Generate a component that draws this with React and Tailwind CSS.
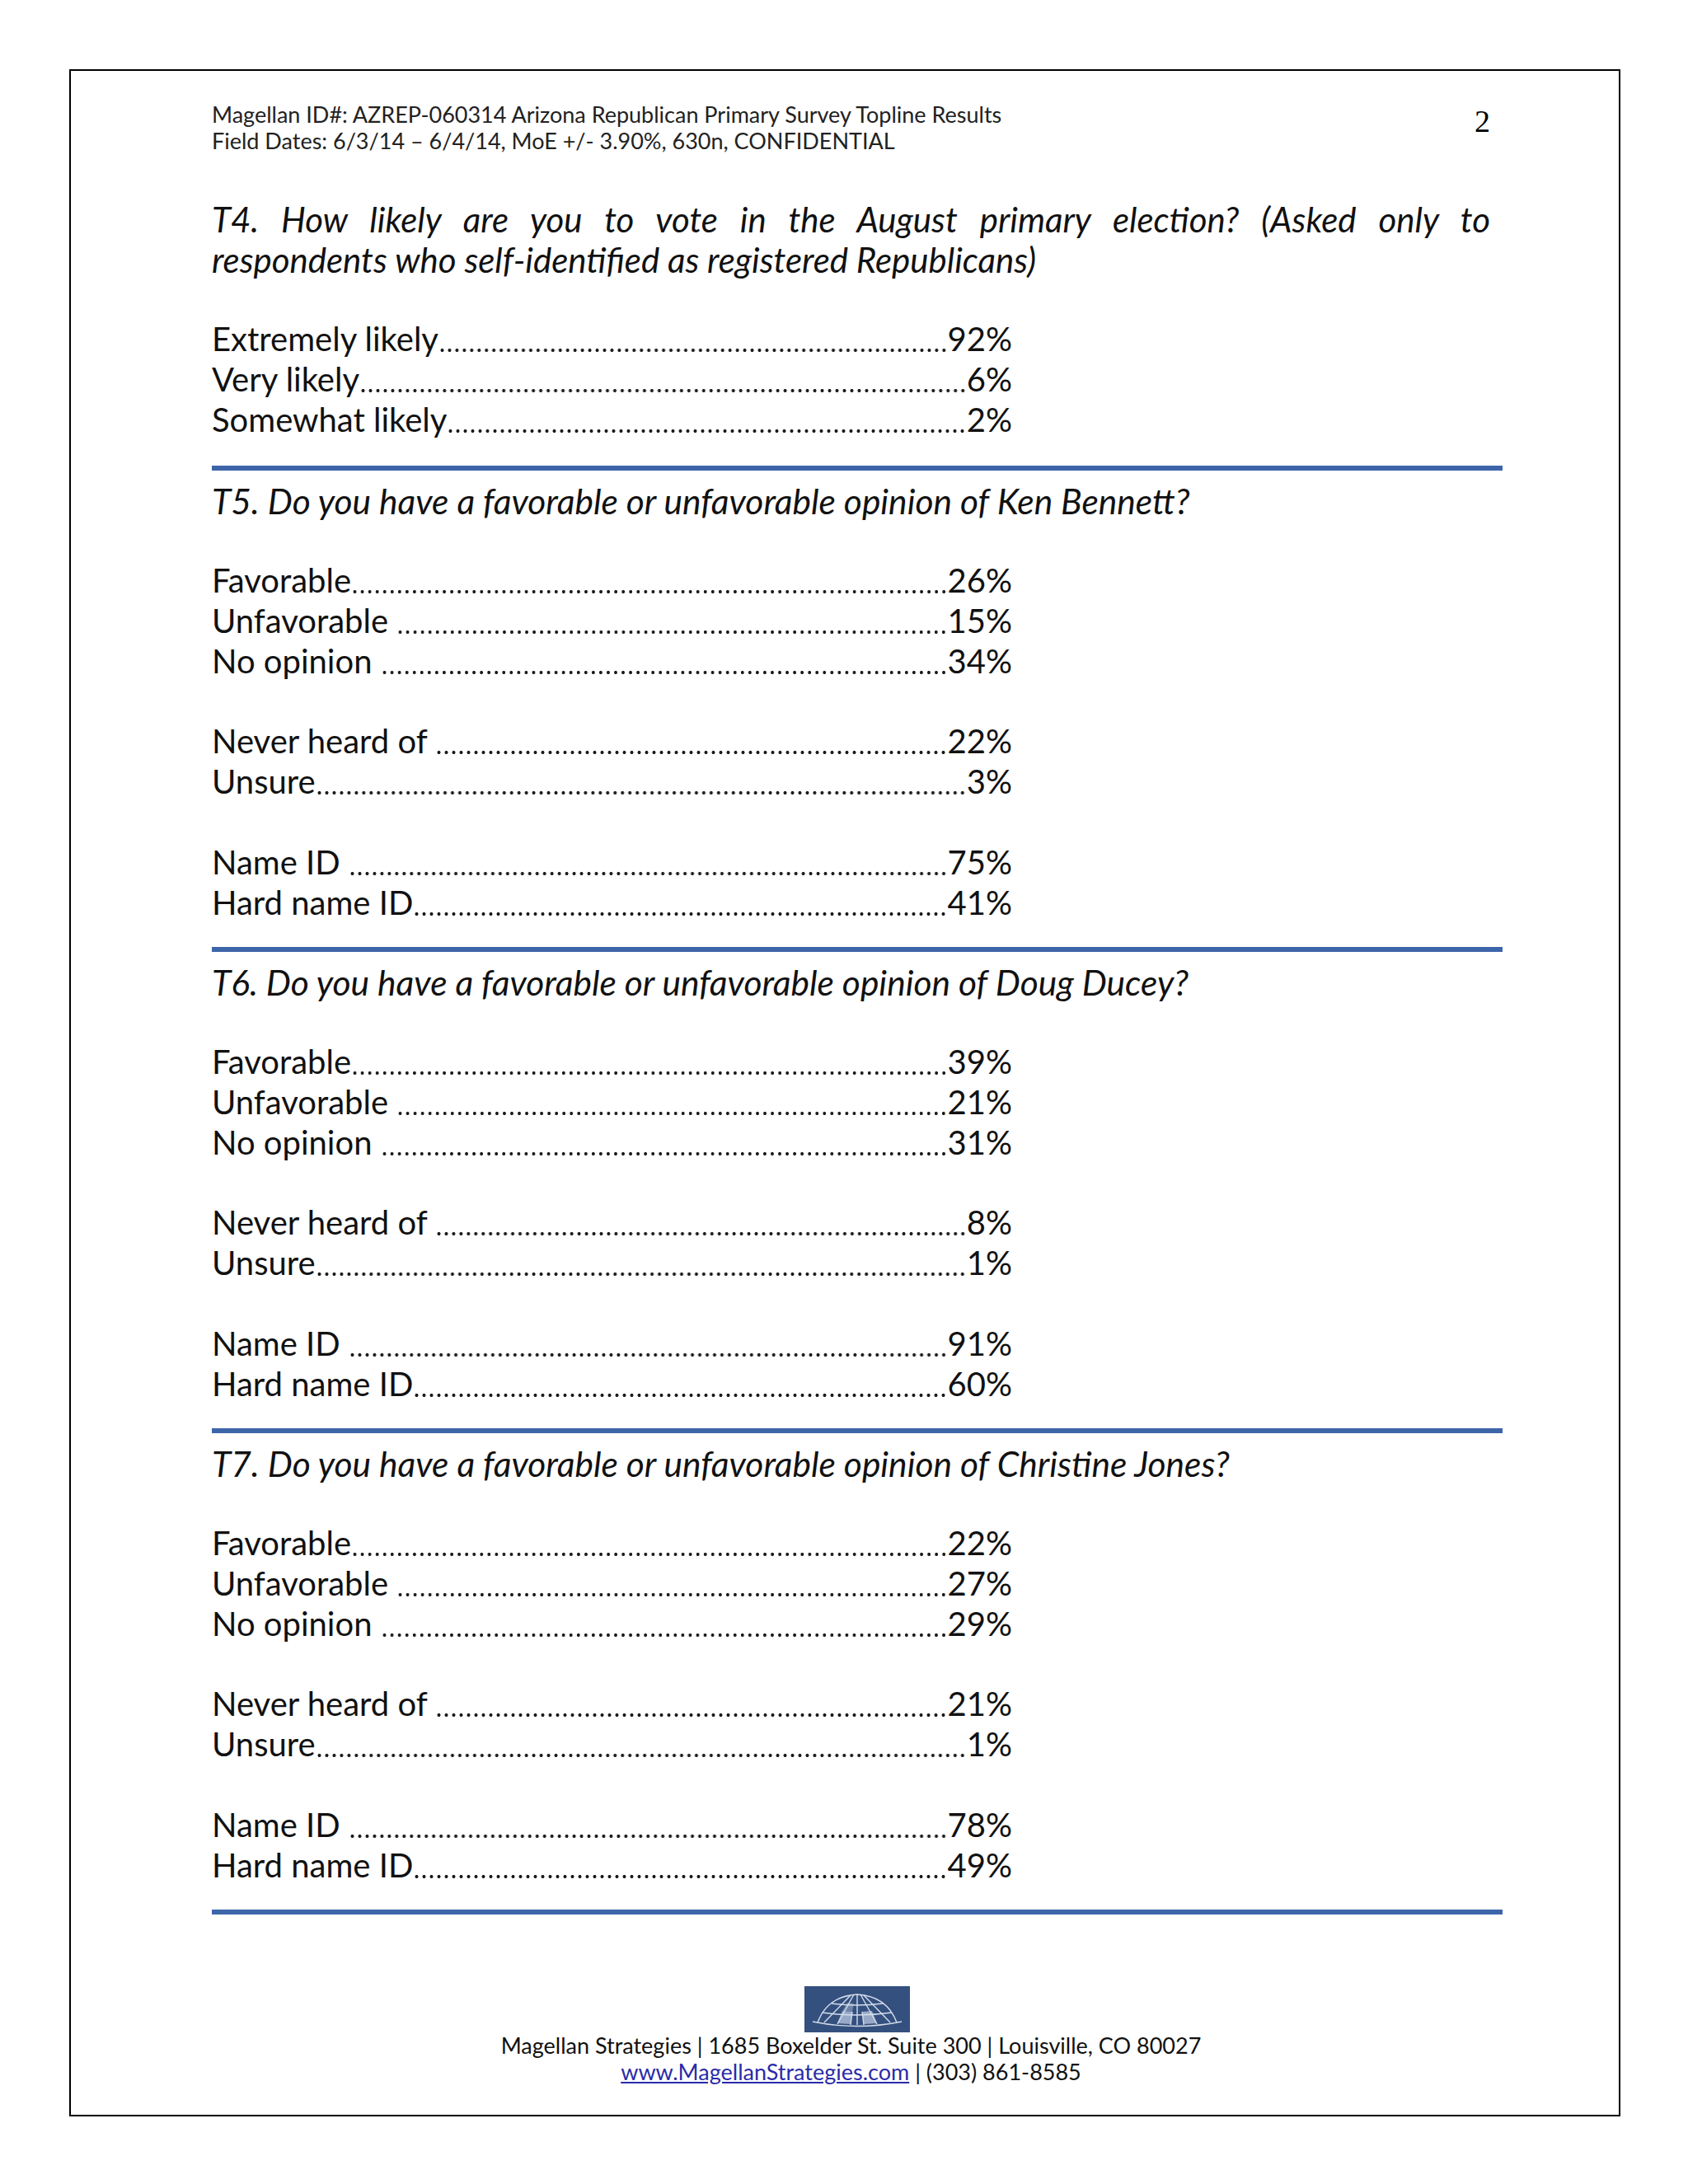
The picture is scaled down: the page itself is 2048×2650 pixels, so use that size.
import React from 'react'

const FONT = { fontFamily: 'Lato, "Open Sans", sans-serif' }

const sections = [
  {
    id: 'T5',
    question: 'T5. Do you have a favorable or unfavorable opinion of Ken Bennett?',
    groups: [
      [['Favorable', '26%'], ['Unfavorable ', '15%'], ['No opinion ', '34%']],
      [['Never heard of ', '22%'], ['Unsure', '3%']],
      [['Name ID ', '75%'], ['Hard name ID', '41%']],
    ],
  },
  {
    id: 'T6',
    question: 'T6. Do you have a favorable or unfavorable opinion of Doug Ducey?',
    groups: [
      [['Favorable', '39%'], ['Unfavorable ', '21%'], ['No opinion ', '31%']],
      [['Never heard of ', '8%'], ['Unsure', '1%']],
      [['Name ID ', '91%'], ['Hard name ID', '60%']],
    ],
  },
  {
    id: 'T7',
    question: 'T7. Do you have a favorable or unfavorable opinion of Christine Jones?',
    groups: [
      [['Favorable', '22%'], ['Unfavorable ', '27%'], ['No opinion ', '29%']],
      [['Never heard of ', '21%'], ['Unsure', '1%']],
      [['Name ID ', '78%'], ['Hard name ID', '49%']],
    ],
  },
]

// label ........ value, the leader is a dotted background so nothing gets clipped
function Row({ label, value }) {
  return (
    <div className="flex w-[971px] h-[49px] text-[40px] leading-[49px] text-[#111]">
      <span className="whitespace-pre">{label}</span>
      <span className="flex-1 bg-[radial-gradient(circle_at_4.5px_38px,#1a1a1a_1.7px,transparent_2.3px)] bg-[length:9px_49px] [background-repeat:round_no-repeat]" />
      <span>{value}</span>
    </div>
  )
}

function BlueRule() {
  return <div className="h-[6px] w-[1566px] bg-[#3d65aa]" />
}

function Logo() {
  return (
    <svg width="128" height="56" viewBox="0 0 128 56">
      <rect width="128" height="56" fill="#34507f" />
      <polygon points="46,30 58,31 56,46 40,45" fill="#a9b8d2" opacity="0.85" />
      <polygon points="70,31 82,30 88,45 72,46" fill="#a9b8d2" opacity="0.85" />
      <polygon points="52,20 60,21 58,31 46,30" fill="#a9b8d2" opacity="0.5" />
      <g fill="none" stroke="#d4dcea" strokeWidth="1.4">
        <path d="M16 44 Q28 12 64 10 Q100 12 112 44" />
        <path d="M10 43 Q64 54 118 43" />
        <path d="M22 32 Q64 38 106 32" />
        <path d="M33 21 Q64 25 95 21" />
        <path d="M64 10 L64 47" />
        <path d="M60 10 L40 46" />
        <path d="M68 10 L88 46" />
        <path d="M56 11 L24 44" />
        <path d="M72 11 L104 44" />
        <path d="M58 31 L56 47" />
        <path d="M70 31 L72 47" />
      </g>
    </svg>
  )
}

export default function App() {
  return (
    <div className="w-[2048px] min-h-[2650px] bg-white pt-[84px] pl-[84px]" style={FONT}>
      <div className="w-[1882px] h-[2484px] border-2 border-black pl-[171px] pt-[37px] flex flex-col">
        {/* Header */}
        <div className="flex w-[1551px] justify-between">
          <div className="text-[27px] leading-[32px] text-[#222]">
            <div>Magellan ID#: AZREP-060314 Arizona Republican Primary Survey Topline Results</div>
            <div>Field Dates: 6/3/14 – 6/4/14, MoE +/- 3.90%, 630n, CONFIDENTIAL</div>
          </div>
          <div
            className="text-[38px] leading-[32px] pt-[8px] text-black"
            style={{ fontFamily: '"Liberation Serif", serif' }}
          >
            2
          </div>
        </div>

        {/* T4 */}
        <div className="mt-[55px] w-[1551px] italic text-[42px] leading-[49px] text-[#111]">
          <div className="text-justify [text-align-last:justify]">
            T4. How likely are you to vote in the August primary election? (Asked only to
          </div>
          <div>respondents who self-identified as registered Republicans)</div>
        </div>
        <div className="mt-[47px]">
          <Row label="Extremely likely" value="92%" />
          <Row label="Very likely" value="6%" />
          <Row label="Somewhat likely" value="2%" />
        </div>
        <div className="mt-[31px]">
          <BlueRule />
        </div>

        {sections.map((s) => (
          <div key={s.id} className="flex flex-col">
            <div className="mt-[12px] h-[49px] italic text-[42.5px] leading-[49px] text-[#111]">{s.question}</div>
            <div className="mt-[48px]">
              {s.groups[0].map(([l, v]) => <Row key={l} label={l} value={v} />)}
            </div>
            <div className="mt-[48px]">
              {s.groups[1].map(([l, v]) => <Row key={l} label={l} value={v} />)}
            </div>
            <div className="mt-[49px]">
              {s.groups[2].map(([l, v]) => <Row key={l} label={l} value={v} />)}
            </div>
            <div className="mt-[29px]">
              <BlueRule />
            </div>
          </div>
        ))}

        {/* Footer */}
        <div className="mt-[87px] w-[1566px] flex justify-center">
          <Logo />
        </div>
        <div className="w-[1551px] text-center text-[27px] leading-[32px] text-[#111]">
          <div>Magellan Strategies | 1685 Boxelder St. Suite 300 | Louisville, CO 80027</div>
          <div>
            <span className="underline text-[#2b2ba8]">www.MagellanStrategies.com</span> | (303) 861-8585
          </div>
        </div>
      </div>
    </div>
  )
}
